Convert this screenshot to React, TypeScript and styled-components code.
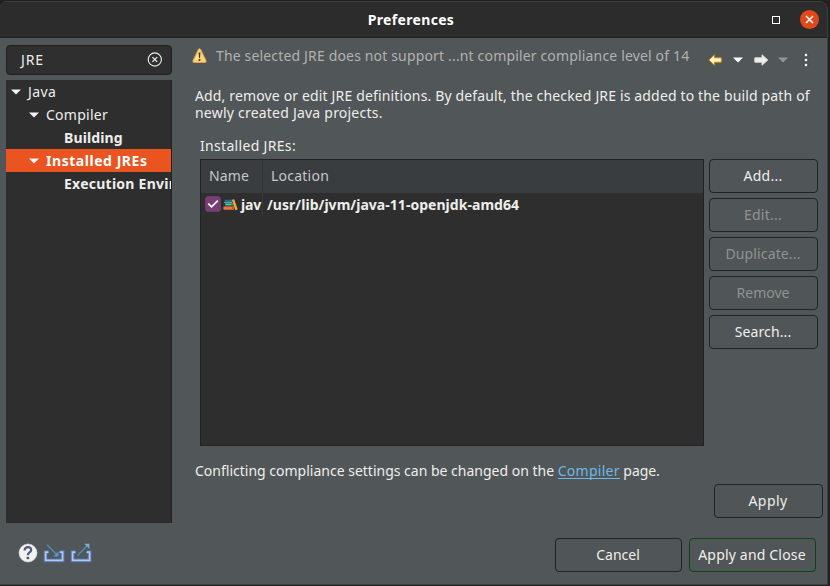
import React from "react";
import styled, { createGlobalStyle } from "styled-components";

const GlobalStyle = createGlobalStyle`
  * { box-sizing: border-box; }
  html, body { margin: 0; background: #232222; }
  body { font: 14px/17px "Noto Sans", sans-serif; color: #eeeeec; overflow: hidden; }
  svg { display: block; flex: none; }
`;

const Frame = styled.div`
  width: 830px;
  height: 586px;
  padding: 1px 2px 1px 0;
  background: #222121;
`;

const Dialog = styled.main`
  display: flex;
  flex-direction: column;
  height: 100%;
  background: #515658;
  border-radius: 7px 9px 0 0;
  border-right: 1px solid #3c3f40;
  border-bottom: 1px solid #3c3f40;
  overflow: hidden;
`;

const TitleBar = styled.header`
  display: grid;
  grid-template-columns: 1fr auto 1fr;
  align-items: center;
  flex: none;
  height: 37px;
  padding: 0 8px 0 0;
  background: #2c2c2c;
  border-top: 1px solid #3d3d3d;
  border-bottom: 1px solid #202020;
`;

const Title = styled.h1`
  grid-column: 2;
  margin: 0 0 0 3px;
  font-size: 14px;
  line-height: 17px;
  font-weight: 700;
  color: #ffffff;
`;

const WindowControls = styled.div`
  display: flex;
  justify-content: flex-end;
  align-items: center;
  gap: 20px;
`;

const MaximizeBox = styled.span`
  width: 8px;
  height: 8px;
  border: 1px solid #ffffff;
`;

const CloseButton = styled.span`
  display: grid;
  place-items: center;
  width: 19px;
  height: 19px;
  border-radius: 50%;
  background: #e2491a;
`;

const Text = styled.span<{ $spacing?: number }>`
  white-space: pre;
  letter-spacing: ${(p) => p.$spacing ?? 0}px;
`;

const Body = styled.div`
  display: grid;
  grid-template-columns: 166px 1fr;
  column-gap: 23px;
  flex: none;
  height: 485px;
  padding: 7px 0 0 6px;
`;

const Sidebar = styled.aside`
  display: flex;
  flex-direction: column;
  gap: 5px;
  min-width: 0;
`;

const SearchField = styled.div`
  display: flex;
  align-items: center;
  justify-content: space-between;
  flex: none;
  height: 30px;
  padding: 0 9px 1px 14px;
  border: 1px solid #1f1f1f;
  border-radius: 4px;
  background: #2f2f2f;
`;

const Tree = styled.div`
  flex: 1;
  overflow: hidden;
  background: #2e2e2e;
  border-right: 1px solid #222222;
`;

const TreeRow = styled.div<{ $level: number; $bold?: boolean; $selected?: boolean }>`
  display: flex;
  align-items: center;
  gap: 6px;
  height: 23px;
  padding-left: ${(p) => 5 + p.$level * 18}px;
  font-weight: ${(p) => (p.$bold ? 700 : 400)};
  color: ${(p) => (p.$selected ? "#ffffff" : "#eeeeec")};
  background: ${(p) => (p.$selected ? "#e95420" : "transparent")};
`;

const ArrowSlot = styled.span`
  display: block;
  flex: none;
  width: 11px;
`;

const Page = styled.section`
  display: flex;
  flex-direction: column;
`;

const MessageBar = styled.div`
  display: flex;
  align-items: flex-start;
  height: 36px;
  color: #b1b2b0;
`;

const WarningSlot = styled.span`
  width: 24px;
  padding: 3px 0 0;
  margin-left: -3px;
`;

const MessageText = styled.div`
  width: 492px;
  padding-top: 2px;
`;

const NavTools = styled.div`
  display: flex;
  align-items: center;
  padding-top: 8px;
`;

const NavItem = styled.span<{ $gap: number }>`
  margin-right: ${(p) => p.$gap}px;
`;

const Description = styled.p`
  display: flex;
  flex-direction: column;
  margin: 6px 0 0;
`;

const FieldLabel = styled.div`
  margin: 16px 0 5px 5px;
`;

const Editor = styled.div`
  display: flex;
  gap: 5px;
  margin-left: 5px;
`;

const Table = styled.div`
  width: 504px;
  height: 287px;
  border: 1px solid #222222;
  background: #2e2e2e;
`;

const HeaderRow = styled.div`
  display: grid;
  grid-template-columns: 61px 1fr;
  height: 33px;
  color: #c6c7c7;
  background: #393d3f;
`;

const HeaderCell = styled.div`
  display: flex;
  align-items: center;
  padding: 0 0 2px 8px;
  & + & { border-left: 1px solid #323637; }
`;

const DataRow = styled.div`
  display: grid;
  grid-template-columns: 61px 1fr;
  height: 23px;
  font-weight: 700;
`;

const DataCell = styled.div`
  display: flex;
  align-items: center;
  padding-left: 4px;
  overflow: hidden;
  & + & { border-left: 1px solid #393939; }
`;

const CheckBox = styled.span`
  display: grid;
  place-items: center;
  flex: none;
  width: 16px;
  height: 16px;
  margin: 0 2px 1px 0;
  border: 1px solid #6c3c69;
  border-radius: 3px;
  background: #763e72;
`;

const CellText = styled(Text)`
  margin-left: 3px;
`;

const ButtonColumn = styled.div`
  display: flex;
  flex-direction: column;
  gap: 5px;
`;

const Button = styled.button<{ $width?: number; $primary?: boolean }>`
  width: ${(p) => p.$width ?? 109}px;
  height: 34px;
  padding: 0 1px 1px 0;
  border: 1px solid ${(p) => (p.$primary ? "#12421a" : "#212324")};
  border-radius: 4px;
  background: #505557;
  font: inherit;
  color: #eeeeec;
  &:disabled { color: #929391; }
`;

const Note = styled.p`
  display: flex;
  margin: 16px 0 0;
`;

const Link = styled.a`
  color: #6cb9e8;
  border-bottom: 1px solid #6cb9e8;
  height: 17px;
`;

const ApplyRow = styled.div`
  display: flex;
  justify-content: flex-end;
  padding: 5px 4px 0 0;
`;

const Footer = styled.footer`
  display: flex;
  align-items: flex-start;
  justify-content: space-between;
  padding: 15px 11px 0 18px;
`;

const FooterIcons = styled.div`
  display: flex;
  align-items: center;
  gap: 5px;
  padding-top: 5px;
`;

const FooterButtons = styled.div`
  display: flex;
  gap: 7px;
`;

const Arrow = ({ color = "#f4f4f4" }: { color?: string }) => (
  <svg width="10" height="6" viewBox="0 0 10 6">
    <path d="M0 .5h10L5 5.5z" fill={color} />
  </svg>
);

const ClearIcon = () => (
  <svg width="15" height="15" viewBox="0 0 15 15" fill="none" stroke="#eeeeec">
    <circle cx="7.8" cy="7.5" r="6.6" strokeWidth="1.1" />
    <path d="M5.4 5.1l4.8 4.8M10.2 5.1L5.4 9.9" strokeWidth="1.3" />
  </svg>
);

const WarningIcon = () => (
  <svg width="15" height="16" viewBox="0 0 15 16">
    <path d="M6.3 1.5Q7.5-.2 8.7 1.5l5.3 11q.7 2-1.2 2H2.2q-1.9 0-1.2-2z" fill="#fcd074" stroke="#dfa052" />
    <path d="M7.4 2.5L3 12h4z" fill="#ffe8a7" opacity=".7" />
    <path d="M6.6 4.5h1.8L8 10H7z" fill="#40372b" />
    <circle cx="7.5" cy="12" r="1.1" fill="#40372b" />
  </svg>
);

const BackIcon = () => (
  <svg width="14" height="12" viewBox="0 0 14 12">
    <path d="M6.5.8v3h6.8v4.4H6.5v3L.8 6z" fill="#fff5c4" stroke="#c98812" strokeLinejoin="round" />
  </svg>
);

const ForwardIcon = () => (
  <svg width="15" height="12" viewBox="0 0 15 12">
    <path d="M8 .8v3H.8v4.4H8v3L13.8 6z" fill="#eeeeee" stroke="#dadada" strokeLinejoin="round" />
  </svg>
);

const MenuDots = () => (
  <svg width="6" height="14" viewBox="0 0 6 14">
    <g fill="#f5f5f5" stroke="#303335" strokeWidth=".8">
      <circle cx="3" cy="2" r="1.9" />
      <circle cx="3" cy="7" r="1.9" />
      <circle cx="3" cy="12" r="1.9" />
    </g>
  </svg>
);

const LibraryIcon = () => (
  <svg width="15" height="12" viewBox="0 0 15 12">
    <path d="M1.5 .8h7.5v2.4H1.5z" fill="#246c91" />
    <path d="M1 3.3h8v.8H1z" fill="#8fb8b0" />
    <path d="M2 4h8v2.8H2z" fill="#23937c" />
    <path d="M3 5h5v.8H3z" fill="#91c5a5" />
    <path d="M.5 7.3h10.5V11H.5z" fill="#c85c3b" />
    <path d="M.5 8.4h8.5v1.2H.5z" fill="#e69a68" />
    <path d="M8.8.8l2.4-.6 3.5 10.3-2.4.7z" fill="#f2a72c" />
  </svg>
);

const HelpIcon = () => (
  <svg width="20" height="20" viewBox="0 0 20 20">
    <circle cx="10" cy="10" r="9" fill="#f2f2f3" stroke="#d6d8dc" strokeWidth=".7" />
    <path d="M6.6 7.5C6.8 2.9 13.6 3.1 13.2 7.1c-.2 2.3-3.4 2.4-3.4 5.1" fill="none" stroke="#4d5c7e" strokeWidth="2.2" />
    <path d="M8.6 13.8h2.6v2.4H8.6z" fill="#4d5c7e" />
  </svg>
);

const Tray = ({ children }: { children: React.ReactNode }) => (
  <svg width="22" height="20" viewBox="0 0 22 20" fill="none">
    <path d="M5.5 9.2H2.6v8.2h17V9.2h-2.9" stroke="#4f73b3" strokeWidth="3.8" />
    <path d="M5.5 9.2H2.6v8.2h17V9.2h-2.9" stroke="#b5c8e9" strokeWidth="1.7" />
    {children}
  </svg>
);

const ImportIcon = () => (
  <Tray>
    <path d="M4 1.8l10.5 10.5" stroke="#4a8eb7" strokeWidth="1.5" />
    <path d="M15.5 8.2v5.2h-5.2z" fill="#5c9bc0" />
  </Tray>
);

const ExportIcon = () => (
  <Tray>
    <path d="M7.5 12.5L18 2" stroke="#4a8eb7" strokeWidth="1.5" />
    <path d="M14.2.8h5.2V6z" fill="#78afcd" />
  </Tray>
);

const treeRows = [
  { label: "Java", level: 0, arrow: true, spacing: 0.4 },
  { label: "Compiler", level: 1, arrow: true, spacing: 0.26 },
  { label: "Building", level: 2, bold: true, spacing: 0.12 },
  { label: "Installed JREs", level: 1, arrow: true, bold: true, selected: true, spacing: 0.54 },
  { label: "Execution Environments", level: 2, bold: true, spacing: 0.25 },
];

const actions = [
  { label: "Add...", spacing: 0.26 },
  { label: "Edit...", spacing: 0.24, disabled: true },
  { label: "Duplicate...", spacing: 0.13, disabled: true },
  { label: "Remove", spacing: 0, disabled: true },
  { label: "Search...", spacing: 0.1 },
];

export default function App() {
  return (
    <Frame>
      <GlobalStyle />
      <Dialog>
        <TitleBar>
          <Title><Text $spacing={0.33}>Preferences</Text></Title>
          <WindowControls>
            <MaximizeBox />
            <CloseButton>
              <svg width="9" height="9" viewBox="0 0 9 9"><path d="M1 1l7 7M8 1L1 8" stroke="#fff" strokeWidth="1.5" /></svg>
            </CloseButton>
          </WindowControls>
        </TitleBar>
        <Body>
          <Sidebar>
            <SearchField>
              <Text $spacing={0.9}>JRE</Text>
              <ClearIcon />
            </SearchField>
            <Tree>
              {treeRows.map((r) => (
                <TreeRow key={r.label} $level={r.level} $bold={r.bold} $selected={r.selected}>
                  <ArrowSlot>{r.arrow && <Arrow />}</ArrowSlot>
                  <Text $spacing={r.spacing}>{r.label}</Text>
                </TreeRow>
              ))}
            </Tree>
          </Sidebar>
          <Page>
            <MessageBar>
              <WarningSlot><WarningIcon /></WarningSlot>
              <MessageText>
                <Text $spacing={0.16}>The selected JRE does not support ...nt compiler compliance level of 14</Text>
              </MessageText>
              <NavTools>
                <NavItem $gap={11}><BackIcon /></NavItem>
                <NavItem $gap={11}><Arrow color="#ffffff" /></NavItem>
                <NavItem $gap={9}><ForwardIcon /></NavItem>
                <NavItem $gap={15}><Arrow color="#939595" /></NavItem>
                <MenuDots />
              </NavTools>
            </MessageBar>
            <Description>
              <Text $spacing={0.15}>Add, remove or edit JRE definitions. By default, the checked JRE is added to the build path of</Text>
              <Text $spacing={0.22}>newly created Java projects.</Text>
            </Description>
            <FieldLabel><Text $spacing={0.32}>Installed JREs:</Text></FieldLabel>
            <Editor>
              <Table>
                <HeaderRow>
                  <HeaderCell><Text $spacing={0.13}>Name</Text></HeaderCell>
                  <HeaderCell><Text $spacing={0.23}>Location</Text></HeaderCell>
                </HeaderRow>
                <DataRow>
                  <DataCell>
                    <CheckBox>
                      <svg width="12" height="10" viewBox="0 0 12 10"><path d="M1.2 4.5l3.3 3.3L10.8 1.6" fill="none" stroke="#fff" strokeWidth="1.7" /></svg>
                    </CheckBox>
                    <LibraryIcon />
                    <CellText $spacing={-0.1}>jav</CellText>
                  </DataCell>
                  <DataCell><Text $spacing={0.04}>/usr/lib/jvm/java-11-openjdk-amd64</Text></DataCell>
                </DataRow>
              </Table>
              <ButtonColumn>
                {actions.map((a) => (
                  <Button key={a.label} disabled={a.disabled}><Text $spacing={a.spacing}>{a.label}</Text></Button>
                ))}
              </ButtonColumn>
            </Editor>
            <Note>
              <Text>Conflicting compliance settings can be changed on the </Text>
              <Link><Text $spacing={0.26}>Compiler</Text></Link>
              <Text $spacing={-0.06}> page.</Text>
            </Note>
            <ApplyRow><Button><Text $spacing={0.42}>Apply</Text></Button></ApplyRow>
          </Page>
        </Body>
        <Footer>
          <FooterIcons><HelpIcon /><ImportIcon /><ExportIcon /></FooterIcons>
          <FooterButtons>
            <Button $width={127}><Text>Cancel</Text></Button>
            <Button $width={127} $primary><Text $spacing={0.18}>Apply and Close</Text></Button>
          </FooterButtons>
        </Footer>
      </Dialog>
    </Frame>
  );
}
